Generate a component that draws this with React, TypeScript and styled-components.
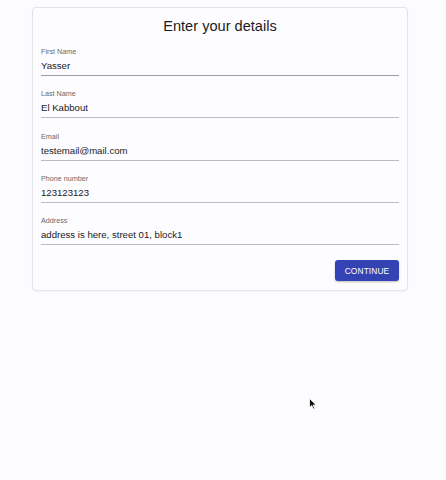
import React from "react";
import styled, { createGlobalStyle } from "styled-components";

const GlobalStyle = createGlobalStyle`
  html, body {
    margin: 0;
    padding: 0;
    background: #fcfbfd;
    font-family: "Liberation Sans", Arial, sans-serif;
  }
`;

const Page = styled.div`
  position: relative;
  width: 446px;
  height: 480px;
  padding: 7px 0 0 32px;
  box-sizing: border-box;
`;

const Card = styled.form`
  width: 376px;
  box-sizing: border-box;
  background: #fdfcfe;
  border: 1px solid #e4e3e6;
  border-radius: 4px;
  box-shadow: 0 1px 2px rgba(0, 0, 0, 0.04);
  padding: 8px 8px 9px 8px;
  display: flex;
  flex-direction: column;
`;

const Title = styled.h2`
  margin: 0 0 10px 0;
  font-size: 14.6px;
  line-height: 20px;
  font-weight: 400;
  text-align: center;
  color: #1b1b1f;
`;

const Fields = styled.div`
  display: flex;
  flex-direction: column;
  gap: 12.25px;
`;

const Field = styled.label<{ $dark?: boolean }>`
  display: flex;
  flex-direction: column;
  padding-bottom: 1px;
  border-bottom: 1px solid ${(p) => (p.$dark ? "#9d9ca1" : "#bdbcc0")};
`;

const Label = styled.span`
  margin-top: 1px;
  font-size: 7.2px;
  line-height: 9px;
  color: #69686e;
`;

const Value = styled.input`
  margin-top: 2px;
  border: none;
  outline: none;
  background: transparent;
  padding: 0;
  font-family: inherit;
  font-size: 9.6px;
  line-height: 16px;
  height: 16px;
  color: #1a1a1e;
`;

const Actions = styled.div`
  display: flex;
  justify-content: flex-end;
  margin-top: 15px;
`;

const Button = styled.button`
  width: 64px;
  height: 21px;
  border: none;
  border-radius: 3px;
  background: #3443b3;
  color: #ffffff;
  font-family: inherit;
  font-size: 8.4px;
  letter-spacing: 0.1px;
  text-transform: uppercase;
  box-shadow: 0 1px 2px rgba(0, 0, 0, 0.25);
  cursor: pointer;
`;

const Cursor = styled.svg`
  position: absolute;
  left: 309px;
  top: 398px;
`;

const fields = [
  { label: "First Name", value: "Yasser", dark: true },
  { label: "Last Name", value: "El Kabbout" },
  { label: "Email", value: "testemail@mail.com" },
  { label: "Phone number", value: "123123123" },
  { label: "Address", value: "address is here, street 01, block1" },
];

const App: React.FC = () => {
  return (
    <Page>
      <GlobalStyle />
      <Card onSubmit={(e) => e.preventDefault()}>
        <Title>Enter your details</Title>
        <Fields>
          {fields.map((f) => (
            <Field key={f.label} $dark={f.dark}>
              <Label>{f.label}</Label>
              <Value defaultValue={f.value} />
            </Field>
          ))}
        </Fields>
        <Actions>
          <Button type="submit">Continue</Button>
        </Actions>
      </Card>
      <Cursor width="8" height="12" viewBox="0 0 8 12">
        <path d="M0.5 0.5 L0.5 9.5 L2.8 7.5 L4.3 11 L5.6 10.4 L4.2 7 L7.2 7 Z" fill="#111" stroke="#fff" strokeWidth="0.8" />
      </Cursor>
    </Page>
  );
};

export default App;
